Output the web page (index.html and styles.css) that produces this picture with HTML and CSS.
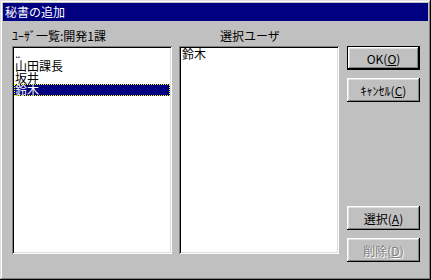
FILE: index.html
```html
<!DOCTYPE html>
<html lang="ja">
<head>
<meta charset="utf-8">
<link rel="stylesheet" href="styles.css">
</head>
<body>
<div class="window">
  <div class="titlebar">秘書の追加</div>
  <div class="client">
    <div class="col">
      <div class="label">ﾕｰｻﾞ一覧:開発1課</div>
      <div class="listbox">
        <div class="item"><span class="dots">..</span></div>
        <div class="item">山田課長</div>
        <div class="item">坂井</div>
        <div class="item selected">鈴木</div>
      </div>
    </div>
    <div class="col col-right">
      <div class="label label-right">選択ユーザ</div>
      <div class="listbox">
        <div class="item">鈴木</div>
      </div>
    </div>
    <div class="buttons">
      <div class="btn default">OK(<u>O</u>)</div>
      <div class="btn">ｷｬﾝｾﾙ(<u>C</u>)</div>
      <div class="btn push-down">選択(<u>A</u>)</div>
      <div class="btn disabled">削除(<u>D</u>)</div>
    </div>
  </div>
</div>
</body>
</html>
```
FILE: styles.css
```css
html, body {
  margin: 0;
  padding: 0;
  background: #c0c0c0;
}
.window {
  box-sizing: border-box;
  width: 431px;
  height: 280px;
  padding: 3px;
  background: #c0c0c0;
  box-shadow: inset -1px -1px #000, inset 1px 1px #dfdfdf, inset -2px -2px #808080, inset 2px 2px #fff;
  font-family: "Noto Sans CJK JP", sans-serif;
  font-size: 12px;
  color: #000;
}
.titlebar {
  height: 18px;
  line-height: 18px;
  background: #000080;
  color: #fff;
  padding-left: 2px;
  white-space: nowrap;
}
.client {
  display: flex;
  padding: 8px 0 0 9px;
}
.col {
  width: 160px;
  display: flex;
  flex-direction: column;
}
.col-right {
  margin-left: 7px;
}
.label {
  height: 14px;
  line-height: 14px;
  margin-bottom: 3px;
  white-space: nowrap;
}
.label-right {
  padding-left: 41px;
}
.listbox {
  box-sizing: border-box;
  height: 208px;
  padding: 2px;
  background: #fff;
  box-shadow: inset 1px 1px #808080, inset -1px -1px #fff, inset 2px 2px #000, inset -2px -2px #dfdfdf;
}
.item {
  height: 12px;
  line-height: 12px;
  padding-left: 1px;
  white-space: nowrap;
}
.dots {
  font-family: "Liberation Sans", sans-serif;
  font-size: 12px;
  letter-spacing: -1px;
  line-height: 0;
  vertical-align: 1px;
}
.selected {
  background: #000080;
  color: #fff;
  outline: 1px dotted #ffff00;
  outline-offset: -1px;
}
.buttons {
  width: 73px;
  height: 216px;
  margin: 17px 0 0 8px;
  display: flex;
  flex-direction: column;
  gap: 8px;
}
.btn {
  box-sizing: border-box;
  height: 24px;
  display: flex;
  align-items: center;
  justify-content: center;
  white-space: nowrap;
  background: #c0c0c0;
  box-shadow: inset -1px -1px #000, inset 1px 1px #fff, inset -2px -2px #808080, inset 2px 2px #dfdfdf;
}
.btn u {
  text-underline-offset: 1px;
}
.default {
  border: 1px solid #000;
}
.push-down {
  margin-top: auto;
}
.disabled {
  color: #808080;
  text-shadow: 1px 1px #fff;
}
```
